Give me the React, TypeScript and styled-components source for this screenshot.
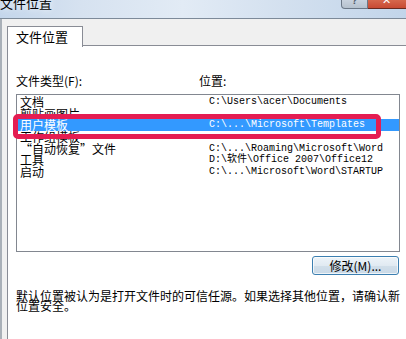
import styled, { createGlobalStyle } from 'styled-components';

const GlobalStyle = createGlobalStyle`
  html, body {
    margin: 0;
    padding: 0;
    overflow: hidden;
  }
  body {
    font-family: 'Noto Sans CJK SC', 'Liberation Sans', sans-serif;
    font-size: 12px;
    color: #000;
  }
`;

type Entry = { name: string; path: string };

const entries: Entry[] = [
  { name: '文档', path: 'C:\\Users\\acer\\Documents' },
  { name: '剪贴画图片', path: '' },
  { name: '用户模板', path: 'C:\\...\\Microsoft\\Templates' },
  { name: '工作组模板', path: '' },
  { name: '“自动恢复”文件', path: 'C:\\...\\Roaming\\Microsoft\\Word' },
  { name: '工具', path: 'D:\\软件\\Office 2007\\Office12' },
  { name: '启动', path: 'C:\\...\\Microsoft\\Word\\STARTUP' },
];

const SELECTED = 2;

const App = () => {
  return (
    <>
      <GlobalStyle />
      <Window>
        <TitleBar>
          <Title>文件位置</Title>
          <Controls>
            <HelpButton>?</HelpButton>
            <CloseButton>✕</CloseButton>
          </Controls>
        </TitleBar>
        <Body>
          <TabStrip>
            <Tab>文件位置</Tab>
          </TabStrip>
          <Panel>
            <Labels>
              <Label>文件类型(F):</Label>
              <Label>位置:</Label>
            </Labels>
            <ListBox>
              <Highlight />
              {entries.map((e, i) => (
                <Row key={e.name} $selected={i === SELECTED}>
                  <Name>{e.name}</Name>
                  <Path>{e.path}</Path>
                </Row>
              ))}
            </ListBox>
            <ButtonRow>
              <ModifyButton>修改(M)...</ModifyButton>
            </ButtonRow>
            <Note>
              默认位置被认为是打开文件时的可信任源。如果选择其他位置，请确认新位置安全。
            </Note>
          </Panel>
        </Body>
      </Window>
    </>
  );
};

const Window = styled.div`
  width: 406px;
  height: 339px;
  overflow: hidden;
  display: flex;
  flex-direction: column;
  background: #f0f0f0;
`;

const TitleBar = styled.div`
  height: 18px;
  flex-shrink: 0;
  display: flex;
  justify-content: space-between;
  align-items: flex-start;
  overflow: hidden;
  background: linear-gradient(
    90deg,
    #c4d6eb 0%,
    #d6e2f0 20%,
    #e2ebf5 45%,
    #d3e0ef 70%,
    #c2d5ea 100%
  );
  border-bottom: 1px solid #7d8a99;
`;

const Title = styled.span`
  font-size: 13px;
  line-height: 13px;
  margin-top: -4px;
  color: #000;
  text-shadow: 0 0 6px #ffffff;
`;

const Controls = styled.div`
  display: flex;
  margin-right: -12px;
`;

const HelpButton = styled.div`
  width: 27px;
  height: 9px;
  box-sizing: border-box;
  border: 1px solid #6b7888;
  border-top: none;
  border-radius: 0 0 0 4px;
  background: linear-gradient(#c8d2de, #b5c1ce);
  color: #4c5866;
  font: bold 10px 'Liberation Sans', sans-serif;
  line-height: 2px;
  text-align: center;
  overflow: hidden;
`;

const CloseButton = styled.div`
  width: 50px;
  height: 9px;
  box-sizing: border-box;
  border: 1px solid #6a2a20;
  border-top: none;
  border-left: none;
  background: linear-gradient(#d6674c, #c84a33);
  color: #fff;
  font: bold 11px 'DejaVu Sans', sans-serif;
  line-height: 2px;
  text-align: center;
  padding-right: 12px;
  overflow: hidden;
`;

const Body = styled.div`
  flex: 1;
  display: flex;
  flex-direction: column;
  padding: 7px 0 0 5px;
  border-left: 2px solid #a9b0b8;
`;

const TabStrip = styled.div`
  display: flex;
  height: 20px;
  margin-bottom: -1px;
  position: relative;
  z-index: 1;
`;

const Tab = styled.div`
  width: 66px;
  height: 20px;
  box-sizing: content-box;
  border: 1px solid #898c95;
  border-bottom: none;
  background: #fff;
  padding-left: 8px;
  font-size: 13px;
  line-height: 20px;
`;

const Panel = styled.div`
  flex: 1;
  background: #fff;
  border-top: 1px solid #898c95;
  border-left: 1px solid #898c95;
  padding: 29px 0 0 8px;
`;

const Labels = styled.div`
  display: grid;
  grid-template-columns: 183px 1fr;
  height: 12px;
  line-height: 12px;
  font-size: 12px;
`;

const Label = styled.span``;

const ListBox = styled.div`
  position: relative;
  margin-top: 7px;
  width: 382px;
  height: 155px;
  border: 1px solid #828790;
  padding-top: 1px;
  box-sizing: content-box;
`;

const Highlight = styled.div`
  position: absolute;
  left: -4px;
  top: 19px;
  width: 358px;
  height: 15px;
  border: 5px solid #e41d52;
  border-radius: 5px;
  z-index: 2;
  pointer-events: none;
`;

const Row = styled.div<{ $selected: boolean }>`
  display: grid;
  grid-template-columns: 192px 1fr;
  height: 11.67px;
  line-height: 11.67px;
  background: ${({ $selected }) => ($selected ? '#3399ff' : 'transparent')};
  color: ${({ $selected }) => ($selected ? '#fff' : '#000')};
  position: relative;
  z-index: ${({ $selected }) => ($selected ? 1 : 0)};
`;

const Name = styled.span`
  padding-left: 3px;
  font-size: 12px;
  white-space: nowrap;
`;

const Path = styled.span`
  font-family: 'Liberation Mono', 'Noto Sans CJK SC', monospace;
  font-size: 10px;
  white-space: nowrap;
`;

const ButtonRow = styled.div`
  display: flex;
  justify-content: flex-end;
  width: 383px;
  margin-top: 4px;
`;

const ModifyButton = styled.button`
  width: 87px;
  height: 19px;
  padding: 0;
  border: 1px solid #3c7fb1;
  border-radius: 3px;
  background: linear-gradient(#eef4f9 0%, #e1eaf2 50%, #d2dfea 51%, #c9d9e7 100%);
  box-shadow: inset 0 0 0 1px rgba(255, 255, 255, 0.7);
  font-family: 'Noto Sans CJK SC', 'Liberation Sans', sans-serif;
  font-size: 12px;
  line-height: 17px;
  color: #000;
`;

const Note = styled.p`
  margin: 16px 0 0;
  width: 386px;
  font-size: 12px;
  line-height: 10px;
`;

export default App;
